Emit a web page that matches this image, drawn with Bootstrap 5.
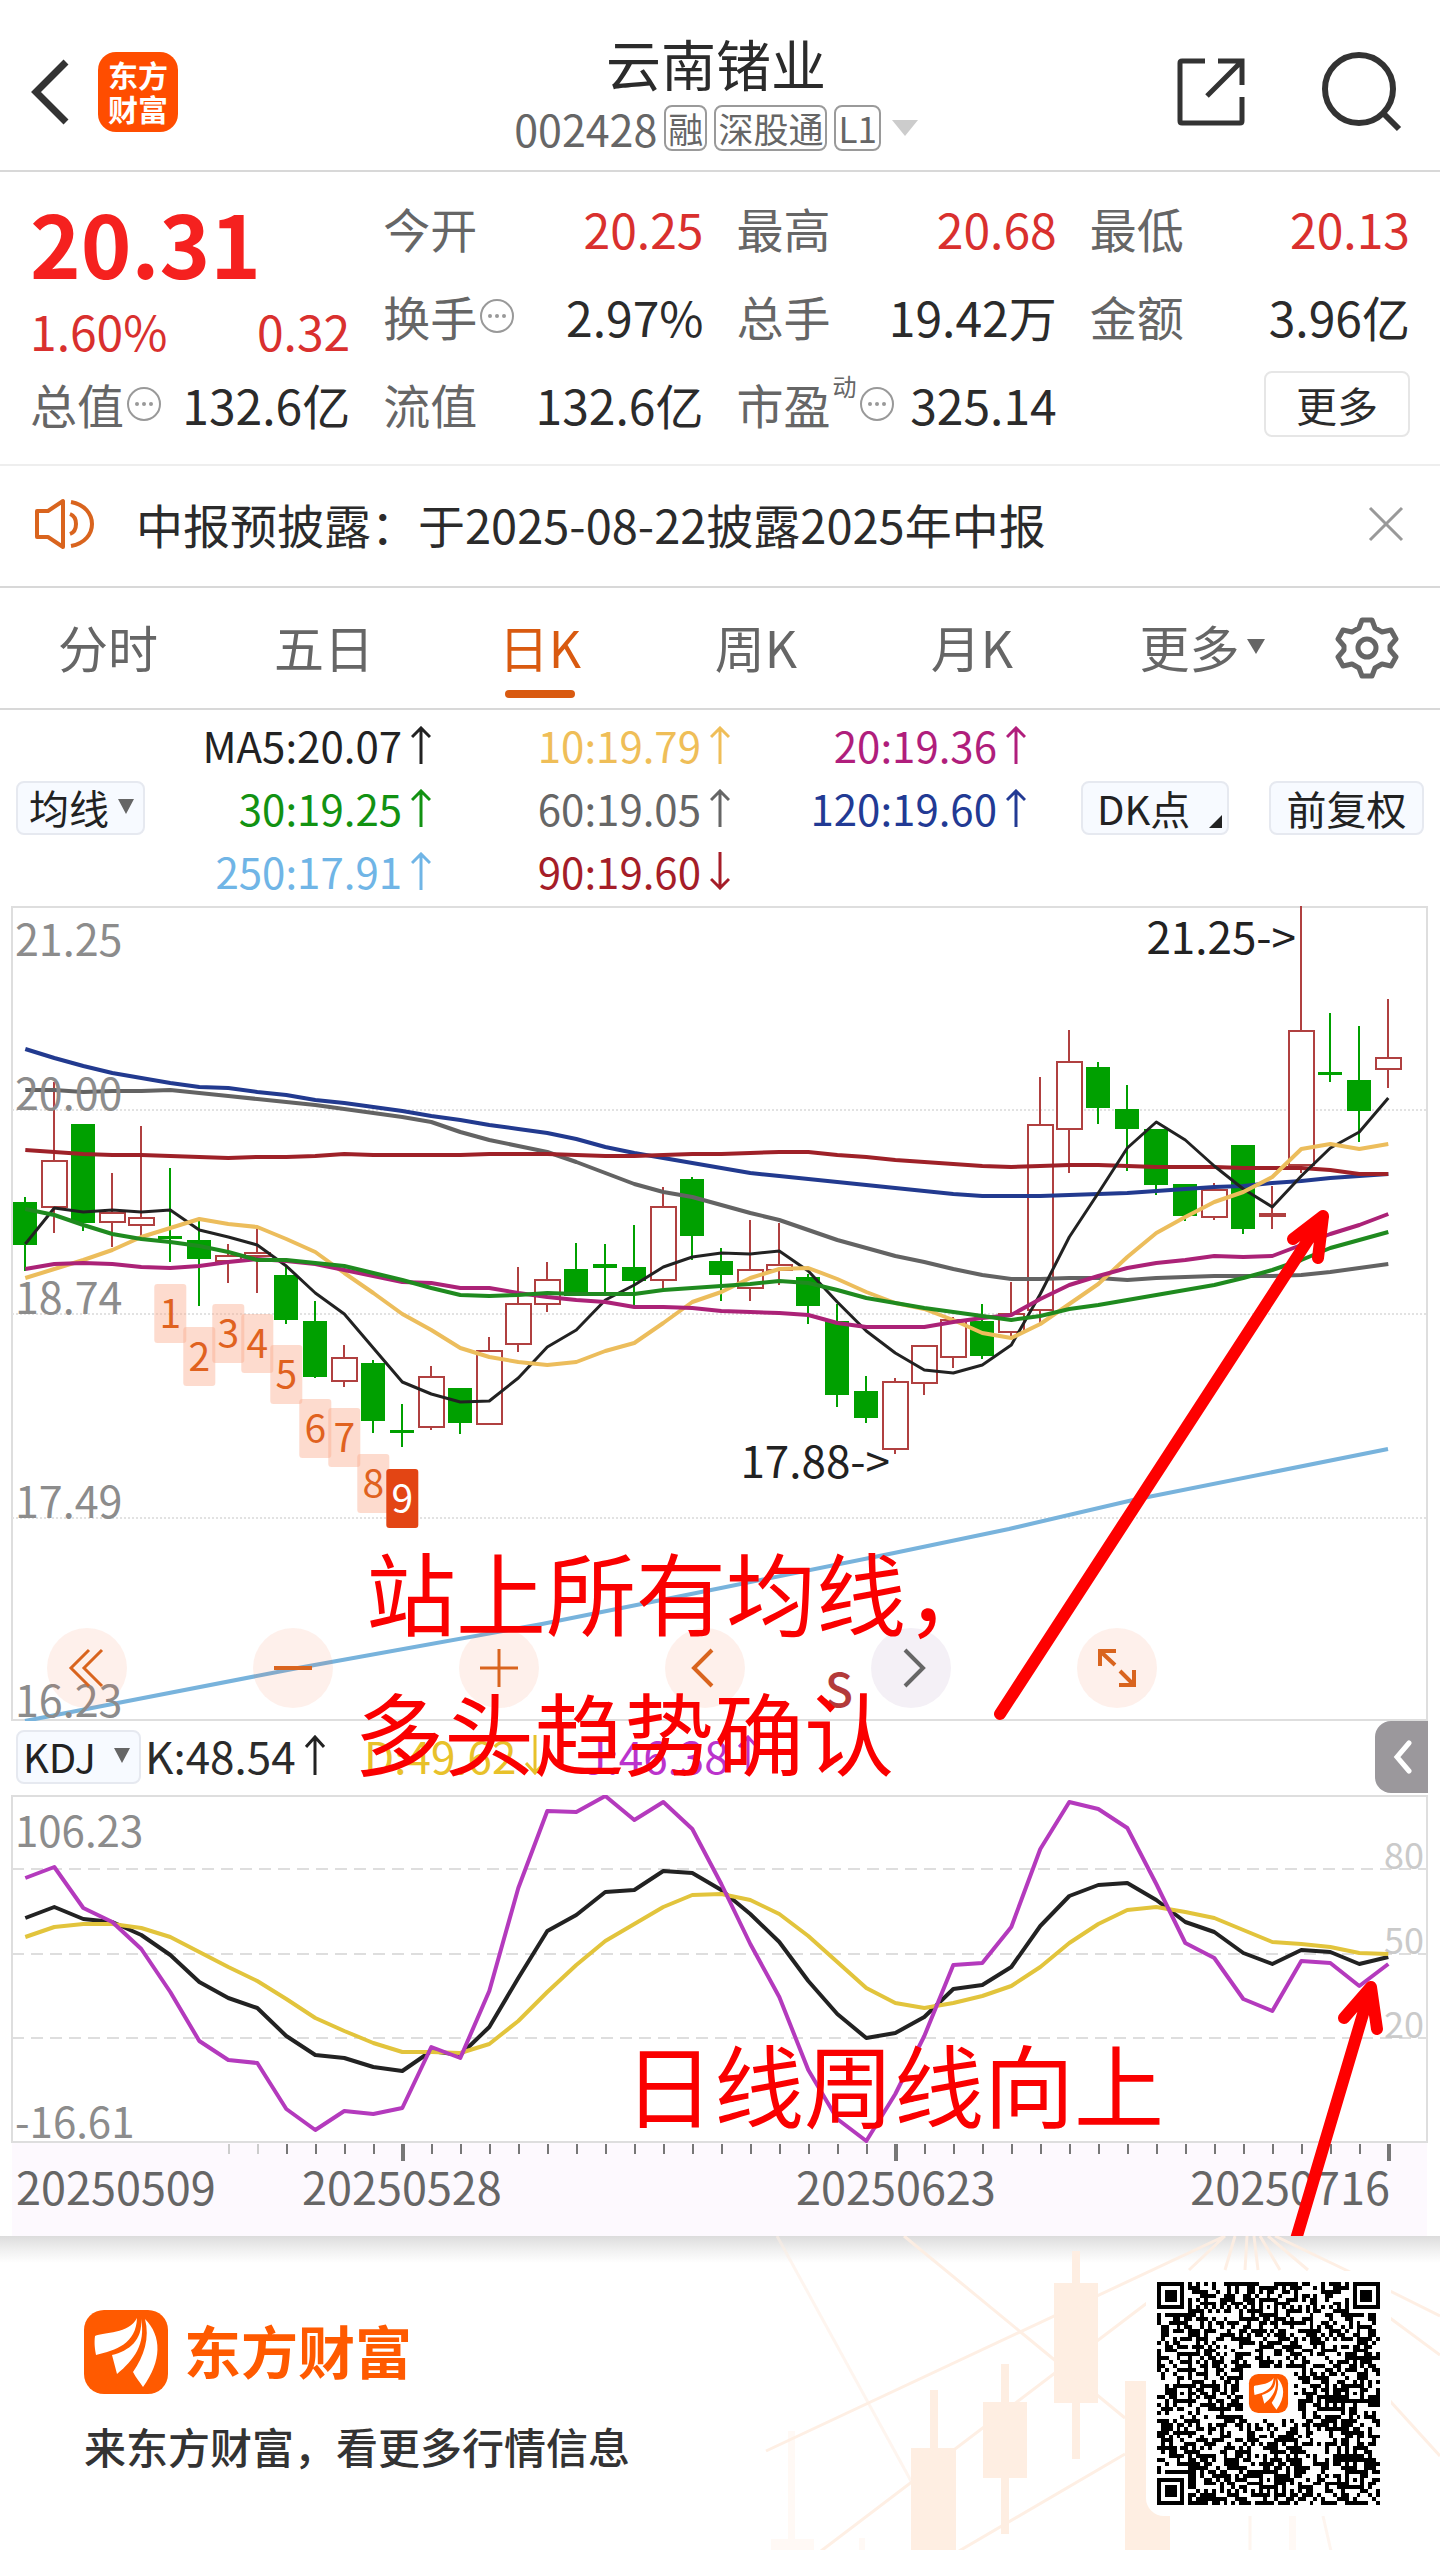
<!DOCTYPE html>
<html lang="zh-CN">
<head>
<meta charset="utf-8">
<meta name="viewport" content="width=device-width, initial-scale=1">
<title>云南锗业 002428</title>
<link href="https://cdn.jsdelivr.net/npm/bootstrap@5.3.0/dist/css/bootstrap.min.css" rel="stylesheet">
<style>
body{font-family:"Noto Sans CJK SC","Noto Sans",sans-serif;color:#2b2b2b;background:#fff;line-height:1.2}
svg{display:block}
button,select{font-family:inherit;color:inherit}
.iconbtn{border:0;background:none;padding:0;display:block}
.topbar{display:grid;grid-template-columns:1fr auto 1fr;height:172px;padding:14px 38px 0 30px;border-bottom:2px solid #d8d8d8}
.applogo{width:80px;height:80px;border-radius:18px;background:#ff4d00;color:#fff;font-size:30px;line-height:34px;font-weight:700;text-align:center;padding-top:5px}
.stock-name{font-size:55px;line-height:72px;font-weight:400;margin:0}
.stock-code{font-size:43px;line-height:60px;color:#666;gap:7px}
.tagbox{font-size:35px;line-height:42px;border:2px solid #9a9a9a;border-radius:8px;padding:0 2px;color:#666}
.caret-s{width:0;height:0;border-left:6px solid transparent;border-right:6px solid transparent;border-top:15px solid #666;display:inline-block}
.caret-l{border-left-width:13px;border-right-width:13px;border-top:16px solid #ccc}
.caret-m{border-left-width:9px;border-right-width:9px}
.quote{display:grid;grid-template-columns:repeat(4,1fr);grid-auto-rows:88px;column-gap:33px;padding:12px 30px 16px;border-bottom:2px solid #eee}
.pricebox{grid-row:span 2}
.price{font-size:86px;line-height:116px;font-weight:700;color:#f5211f}
.qcell{display:flex;align-items:center;justify-content:space-between;white-space:nowrap;font-size:48px;line-height:60px}
.qlabel{color:#666;font-size:47px;display:flex;align-items:center;gap:2px}
.qlabel sup{font-size:24px;top:-18px}
.up{color:#d9302e}
.morebtn{width:146px;height:66px;border:2px solid #e6e6e6;border-radius:8px;background:#fff;font-size:41px;line-height:56px;padding:0}
.notice{height:122px;padding:0 36px 4px 34px;border-bottom:2px solid #d8d8d8;font-size:47px}
.tabs{height:122px;border-bottom:2px solid #d8d8d8;font-size:50px}
.tabs a{width:15%;height:100%;color:#666;text-decoration:none;position:relative;padding-bottom:4px}
.tabs a.wide{width:17%}
.tabs a.on{color:#d95a10}
.tabs a.on::after{content:"";position:absolute;left:50%;bottom:10px;width:70px;height:8px;margin-left:-35px;border-radius:4px;background:#d95a10}
.tabs .gear{width:8%;padding-left:10px}
.mabar{height:196px;padding:0 16px}
.magrid{display:grid;grid-template-columns:287fr 300fr 297fr;grid-auto-rows:63px;flex:1;font-size:42px;margin-right:55px}
.magrid div,.kv{display:flex;align-items:center;justify-content:flex-end;gap:9px;white-space:nowrap}
.chip,.chip select{font-size:40px;line-height:50px;color:#222}
.chip{position:relative;height:54px;border:2px solid #e6e9f0;border-radius:8px;background:#f7faff;padding:0;display:block}
.chip select{appearance:none;border:0;background:transparent;padding:0 0 0 11px;width:100%;height:48px;line-height:46px;display:block}
.chip .caret-s{position:absolute;right:9px;top:16px;border-left-width:8px;border-right-width:8px}
.chip .corner{position:absolute;right:5px;bottom:5px;border-left:13px solid transparent;border-bottom:13px solid #222}
.w-ma{width:129px}.w-dk{width:148px;text-align:left;padding-left:14px}.w-fq{width:155px;margin-left:40px}.w-kdj{width:125px}
.w-kdj select{padding-left:5px}
.kdjbar{height:74px;padding:0 0 2px 16px;font-size:44px}
.kv{width:219px;justify-content:flex-start;line-height:50px;padding-bottom:4px}
.drawer{width:53px;height:72px;border:0;border-radius:16px 0 0 16px;background:#9b989c;margin-right:12px;padding:0 0 0 18px}
.chartzone{position:relative}
.chartzone text{font-family:"Noto Sans CJK SC","Noto Sans",sans-serif}
.overlay{position:absolute;left:0;top:0;width:100%;pointer-events:none}
.ctrls{position:absolute;left:47px;top:722px;display:flex;gap:126px}
.ctrls button{width:80px;height:80px;border-radius:50%;border:0;padding:0;background:rgba(250,110,60,.1)}
.ctrls button.off{background:rgba(110,70,140,.08)}
.ctrls svg{margin:auto}
.foot{position:relative;height:315px;overflow:hidden;background:linear-gradient(#dcdcdc,#f0f0f0 14px,#fff 27px)}
.foot .deco{position:absolute;right:0;top:0}
.brand{font-size:57px;line-height:64px;font-weight:700;color:#ff5a00;padding-bottom:6px}
.slogan{font-size:42px;line-height:56px;font-weight:500;color:#333;margin-top:24px}
.footrow{position:relative;padding:35px 49px 0 84px}
.footcol{padding-top:39px}
.qrcard{background:#fff;border-radius:18px;padding:11px;width:245px;height:245px}
</style>
</head>
<body>
<header class="topbar">
  <div class="d-flex align-items-center" style="gap:28px">
    <button class="iconbtn" aria-label="返回"><svg width="40" height="66" viewBox="0 0 40 66" fill="none" stroke="#333" stroke-width="7"><path d="M36 3 6 33l30 30"/></svg></button>
    <div class="applogo">东方<br>财富</div>
  </div>
  <div class="text-center pt-2 mt-1">
    <h1 class="stock-name">云南锗业</h1>
    <div class="stock-code d-flex align-items-center justify-content-center"><span>002428</span><span class="tagbox">融</span><span class="tagbox">深股通</span><span class="tagbox">L1</span><span class="caret-s caret-l ms-1"></span></div>
  </div>
  <div class="d-flex align-items-center justify-content-end" style="gap:72px">
    <button class="iconbtn" aria-label="分享"><svg width="70" height="70" viewBox="0 0 70 70" fill="none" stroke="#333" stroke-width="5"><path stroke-linejoin="round" d="M29 4H6q-2 0-2 2v58q0 2 2 2h58q2 0 2-2V40"/><path d="M42 4h24v24M66 4 31 39"/></svg></button>
    <button class="iconbtn" aria-label="搜索"><svg width="84" height="84" viewBox="0 0 84 84" fill="none" stroke="#333" stroke-width="6"><circle cx="41" cy="39" r="34"/><path d="m65 63 16 16"/></svg></button>
  </div>
</header>

<section class="quote">
  <div class="pricebox">
    <div class="price">20.31</div>
    <div class="qcell up"><span>1.60%</span><span>0.32</span></div>
  </div>
  <div class="qcell"><span class="qlabel">今开</span><span class="up">20.25</span></div>
  <div class="qcell"><span class="qlabel">最高</span><span class="up">20.68</span></div>
  <div class="qcell"><span class="qlabel">最低</span><span class="up">20.13</span></div>
  <div class="qcell"><span class="qlabel">换手<svg width="37" height="37" viewBox="0 0 37 37" fill="#999"><circle cx="18" cy="18" r="16" fill="none" stroke="#999" stroke-width="2"/><circle cx="11" cy="18" r="2"/><circle cx="18" cy="18" r="2"/><circle cx="25" cy="18" r="2"/></svg></span><span>2.97%</span></div>
  <div class="qcell"><span class="qlabel">总手</span><span>19.42万</span></div>
  <div class="qcell"><span class="qlabel">金额</span><span>3.96亿</span></div>
  <div class="qcell"><span class="qlabel">总值<svg width="37" height="37" viewBox="0 0 37 37" fill="#999"><circle cx="18" cy="18" r="16" fill="none" stroke="#999" stroke-width="2"/><circle cx="11" cy="18" r="2"/><circle cx="18" cy="18" r="2"/><circle cx="25" cy="18" r="2"/></svg></span><span>132.6亿</span></div>
  <div class="qcell"><span class="qlabel">流值</span><span>132.6亿</span></div>
  <div class="qcell"><span class="qlabel">市盈<sup>动</sup><svg width="37" height="37" viewBox="0 0 37 37" fill="#999"><circle cx="18" cy="18" r="16" fill="none" stroke="#999" stroke-width="2"/><circle cx="11" cy="18" r="2"/><circle cx="18" cy="18" r="2"/><circle cx="25" cy="18" r="2"/></svg></span><span>325.14</span></div>
  <div class="qcell justify-content-end"><button class="morebtn">更多</button></div>
</section>

<section class="notice d-flex align-items-center">
  <svg width="62" height="54" viewBox="0 0 62 54" fill="none" stroke="#d9641e" stroke-width="4" stroke-linejoin="round"><path d="M3 14h11L29 4v46L14 40H3Z"/><path d="M36 17c8 3 8 17 0 20M37 5c28 5 28 39 0 44"/></svg>
  <span class="ms-4 ps-3 me-auto">中报预披露：于2025-08-22披露2025年中报</span>
  <button class="iconbtn" aria-label="关闭"><svg width="36" height="36" viewBox="0 0 36 36" stroke="#999" stroke-width="3"><path d="m2 2 32 32M34 2 2 34"/></svg></button>
</section>

<nav class="tabs d-flex align-items-center">
  <a href="#" class="d-flex align-items-center justify-content-center">分时</a>
  <a href="#" class="d-flex align-items-center justify-content-center">五日</a>
  <a href="#" class="on d-flex align-items-center justify-content-center">日K</a>
  <a href="#" class="d-flex align-items-center justify-content-center">周K</a>
  <a href="#" class="d-flex align-items-center justify-content-center">月K</a>
  <a href="#" class="wide d-flex align-items-center justify-content-center">更多<span class="caret-s caret-m ms-2"></span></a>
  <button class="iconbtn gear" aria-label="设置"><svg width="64" height="64" viewBox="0 0 64 64" fill="none" stroke="#666" stroke-width="5" stroke-linejoin="round"><path d="M27 4h10l3 8 7 4 9-2 5 9-6 7v4l6 7-5 9-9-2-7 4-3 8H27l-3-8-7-4-9 2-5-9 6-7v-4l-6-7 5-9 9 2 7-4Z"/><circle cx="32" cy="32" r="9"/></svg></button>
</nav>

<section class="mabar d-flex align-items-center">
  <label class="chip w-ma"><select aria-label="主图指标"><option>均线</option></select><span class="caret-s"></span></label>
  <div class="magrid" id="ma"></div>
  <button class="chip w-dk">DK点<span class="corner"></span></button>
  <button class="chip w-fq">前复权</button>
</section>

<main class="chartzone">
  <svg id="kline" viewBox="0 905 1440 815" width="100%"></svg>
  <div class="kdjbar d-flex align-items-center">
    <label class="chip w-kdj"><select aria-label="副图指标"><option>KDJ</option></select><span class="caret-s"></span></label>
    <div class="kv ms-1">K:48.54<svg width="20" height="40" viewBox="0 0 20 40" fill="none" stroke="#222" stroke-width="3"><path d="M10 40V2M1 12 10 2l9 10"/></svg></div>
    <div class="kv" style="color:#e8c12a">D:49.62<svg width="20" height="40" viewBox="0 0 20 40" fill="none" stroke="currentColor" stroke-width="3"><path d="M10 0v38M1 28l9 10 9-10"/></svg></div>
    <div class="kv me-auto" style="color:#bb33cc">J:46.38<svg width="20" height="40" viewBox="0 0 20 40" fill="none" stroke="currentColor" stroke-width="3"><path d="M10 40V2M1 12 10 2l9 10"/></svg></div>
    <button class="drawer" aria-label="展开"><svg width="20" height="34" viewBox="0 0 20 34" fill="none" stroke="#fff" stroke-width="5" stroke-linecap="round"><path d="M16 3 4 17l12 14"/></svg></button>
  </div>
  <svg id="kdj" viewBox="0 1794 1440 441" width="100%"></svg>
  <div class="ctrls">
    <button aria-label="快退"><svg width="40" height="40" fill="none" stroke="#d9641e" stroke-width="3"><path d="M22 2 4 20l18 18M35 2 17 20l18 18"/></svg></button>
    <button aria-label="缩小"><svg width="40" height="40" fill="none" stroke="#d9641e" stroke-width="4"><path d="M1 20h38"/></svg></button>
    <button aria-label="放大"><svg width="40" height="40" fill="none" stroke="#d9641e" stroke-width="3"><path d="M1 20h38M20 1v38"/></svg></button>
    <button aria-label="左移"><svg width="40" height="40" fill="none" stroke="#d9641e" stroke-width="4"><path d="M27 2 9 20l18 18"/></svg></button>
    <button class="off" aria-label="右移"><svg width="40" height="40" fill="none" stroke="#666" stroke-width="4"><path d="m14 2 18 18-18 18"/></svg></button>
    <button aria-label="全屏"><svg width="40" height="40" fill="none" stroke="#d9641e" stroke-width="4"><path d="M3 18V3h16M3 3l15 14M37 22v15H22M37 37 23 23"/></svg></button>
  </div>
  <svg class="overlay" viewBox="0 905 1440 1330">
    <g fill="none" stroke="#fe0000" stroke-width="12" stroke-linecap="round" stroke-linejoin="round">
      <path d="M1000 1713 1323 1216M1293 1238l30-23-5 42"/>
      <path d="M1294 2245 1371 1986M1344 2017l27-31 6 42"/>
    </g>
    <g fill="#fa0000" font-size="90">
      <text x="366" y="1628">站上所有均线，</text>
      <text x="354" y="1768">多头趋势确认</text>
      <text x="624" y="2120">日线周线向上</text>
    </g>
  </svg>
</main>

<footer class="foot">
  <svg class="deco" width="720" height="315" viewBox="720 2235 720 315" fill="#feeee2" stroke="#feeee2">
    <g stroke="none"><path d="M1054 2282h44v120h-44ZM1072 2250h8v208h-8ZM983 2401h44v76h-44ZM1001 2363h8v170h-8ZM911 2447h45v103h-45ZM930 2389h8v60h-8ZM1125 2380h45v170h-45Z"/><path opacity=".35" d="M771 2538h43v12h-43ZM788 2430h7v110h-7ZM859 2537h6v13h-6ZM1289 2500h7v50h-7Z"/></g>
    <g fill="none" stroke-width="3" opacity=".9"><path d="m904 2235 221 182M766 2450l459-215M821 2550l326-248M959 2550l166-97M1225 2235l-36 34M1235 2235l-10 34M1247 2235l-2 34M1254 2235l4 34M1260 2235l20 34M1268 2235l40 34M1275 2235l75 36M1390 2290l50 25M1390 2317l50 37M1390 2400l50 55"/><path opacity=".6" d="m777 2235 134 245M1250 2515v35M1323 2515l8 35"/></g>
  </svg>
  <div class="footrow d-flex justify-content-between align-items-start">
    <div class="footcol d-flex flex-column">
      <div class="d-flex align-items-center gap-3">
        <svg width="84" height="84" viewBox="0 0 84 84"><use href="#mk"/></svg>
        <span class="brand">东方财富</span>
      </div>
      <div class="slogan">来东方财富，看更多行情信息</div>
    </div>
    <div class="qrcard"><svg id="qr" width="223" height="223" viewBox="0 0 57 57" shape-rendering="crispEdges"></svg></div>
  </div>
  <svg width="0" height="0"><defs><g id="mk"><rect width="84" height="84" rx="20" fill="#ff5a00"/><path fill="#fff" d="M53 8C45 24 20 22 11 26c-1 8 0 13 1 19C32 40 52 34 53 8ZM57 9c2 21-12 32-29 36l5 19C50 50 62 34 57 9ZM61 9c17 17 17 42-2 68-3-5-7-9-10-15C60 46 66 28 61 9Z"/></g></defs></svg>
</footer>

<script src="https://cdn.jsdelivr.net/npm/bootstrap@5.3.0/dist/js/bootstrap.bundle.min.js"></script>
<script>
const X = i => 25.3 + 29 * i;
const poly = (ys, c, w) => `<polyline fill="none" stroke="${c}" stroke-width="${w}" stroke-linejoin="round" points="${ys.map((y, i) => X(i).toFixed(1) + ',' + y).join(' ')}"/>`;

// moving-average legend
const ma = [['MA5:20.07','#222',1],['10:19.79','#efbe58',1],['20:19.36','#b01e7c',1],['30:19.25','#129212',1],['60:19.05','#666',1],['120:19.60','#223a94',1],['250:17.91','#70b5e6',1],['90:19.60','#a51d28',0]];
document.getElementById('ma').innerHTML = ma.map(([t, c, u]) => `<div style="color:${c}">${t}<svg width="20" height="38" viewBox="0 0 20 38" fill="none" stroke="currentColor" stroke-width="3"><path d="${u ? 'M10 38V2M1 11 10 2l9 9' : 'M10 0v36M1 27l9 9 9-9'}"/></svg></div>`).join('');

// candles: [up, bodyTop, bodyBottom, high, low]
const C = [[0,1201,1244,1196,1270],[1,1160,1206,1081,1232],[0,1123,1222,1123,1230],[1,1212,1221,1172,1246],[1,1217,1224,1125,1239],[0,1235,1238,1167,1261],[0,1239,1258,1220,1305],[1,1255,1260,1243,1282],[1,1252,1255,1227,1292],[0,1274,1319,1266,1323],[0,1320,1376,1300,1377],[1,1357,1380,1344,1386],[0,1362,1420,1359,1432],[0,1429,1432,1403,1446],[1,1376,1426,1365,1429],[0,1387,1422,1387,1433],[1,1350,1423,1336,1424],[1,1303,1343,1266,1351],[1,1279,1303,1261,1311],[0,1268,1295,1242,1295],[0,1263,1267,1243,1293],[0,1266,1280,1224,1304],[1,1206,1279,1186,1289],[0,1178,1235,1176,1259],[0,1260,1274,1247,1300],[1,1269,1287,1219,1300],[1,1264,1269,1222,1284],[0,1276,1305,1273,1323],[0,1320,1394,1303,1406],[0,1390,1417,1375,1422],[1,1381,1448,1377,1453],[1,1345,1382,1344,1394],[1,1319,1356,1316,1367],[0,1320,1355,1303,1358],[1,1313,1331,1281,1335],[1,1124,1309,1076,1324],[1,1061,1128,1029,1172],[0,1066,1107,1061,1123],[0,1108,1128,1084,1170],[0,1128,1184,1128,1194],[0,1183,1215,1183,1220],[1,1189,1216,1182,1219],[0,1144,1228,1144,1233],[1,1213,1215,1185,1228],[1,1030,1164,905,1172],[0,1071,1074,1012,1081],[0,1079,1110,1025,1141],[1,1057,1068,998,1087]];
const MA = {
 '#636363':[1089,1089,1091,1090,1090,1089,1092,1095,1098,1101,1104,1108,1112,1116,1121,1131,1139,1145,1151,1161,1172,1183,1191,1196,1204,1212,1219,1229,1239,1247,1255,1261,1268,1274,1278,1278,1277,1277,1279,1277,1276,1275,1275,1275,1274,1271,1267,1263],
 '#223a8f':[1048,1057,1065,1072,1077,1082,1086,1087,1091,1094,1099,1102,1106,1110,1115,1119,1124,1128,1132,1138,1146,1152,1157,1162,1167,1172,1175,1178,1181,1184,1187,1190,1193,1195,1195,1195,1194,1193,1192,1190,1188,1186,1185,1182,1180,1177,1175,1173],
 '#9e2128':[1149,1151,1153,1154,1154,1155,1156,1157,1156,1156,1155,1153,1154,1154,1154,1154,1153,1153,1153,1154,1155,1155,1154,1153,1153,1152,1151,1151,1154,1156,1159,1161,1163,1165,1166,1165,1164,1164,1165,1166,1166,1166,1167,1167,1167,1169,1173,1173],
 '#222222':[1243,1207,1211,1209,1211,1209,1229,1236,1244,1265,1292,1313,1347,1381,1393,1401,1400,1377,1346,1329,1299,1284,1266,1256,1252,1253,1250,1270,1301,1330,1352,1369,1372,1364,1344,1293,1236,1192,1147,1121,1139,1165,1188,1206,1175,1147,1131,1097],
 '#ecbd5c':[1277,1268,1259,1249,1236,1227,1218,1223,1226,1238,1251,1272,1292,1313,1329,1347,1356,1361,1364,1361,1350,1342,1322,1301,1291,1277,1268,1267,1278,1291,1302,1308,1319,1332,1337,1323,1303,1283,1256,1232,1216,1201,1191,1176,1148,1143,1148,1143],
 '#ab2277':[1268,1263,1262,1263,1266,1267,1265,1261,1258,1260,1263,1269,1275,1281,1282,1287,1287,1292,1296,1299,1301,1306,1306,1307,1310,1311,1312,1314,1322,1326,1326,1326,1321,1317,1314,1298,1284,1275,1267,1262,1259,1255,1256,1255,1244,1233,1224,1213],
 '#1f8a1f':[1208,1214,1224,1233,1238,1241,1245,1251,1259,1259,1262,1265,1272,1279,1287,1294,1295,1294,1292,1293,1293,1293,1289,1287,1285,1283,1280,1282,1289,1297,1302,1307,1311,1315,1319,1315,1308,1304,1299,1294,1289,1284,1277,1269,1259,1247,1239,1231]
};
let s = '<g fill="none" stroke="#dedede" stroke-width="2"><rect x="12" y="906" width="1415" height="813"/><path stroke="#e2e2e2" stroke-dasharray="2 2" d="M12 1109h1415M12 1313h1415M12 1517h1415"/></g>';
C.forEach(([u, a, b, h, l], i) => {
  const x = Math.round(X(i)), c = u ? '#b04040' : '#00a000';
  s += `<path stroke="${c}" stroke-width="2" d="M${x} ${h}V${a}M${x} ${b}V${l}"/>`;
  s += u ? `<rect x="${x - 12}" y="${a}" width="25" height="${b - a}" fill="#fff" stroke="${c}" stroke-width="2"/>`
         : `<rect x="${x - 12}" y="${a}" width="24" height="${b - a}" fill="${c}"/>`;
});
s += '<polyline fill="none" stroke="#78b3dc" stroke-width="4" points="25,1720 298,1667 542,1623 721,1587 894,1552 1009,1528 1133,1499 1388,1448"/>';
for (const c in MA) s += poly(MA[c], c, c === '#222222' ? 3 : 4);
[1283,1326,1303,1313,1344,1398,1407,1453,1468].forEach((y, i) => {
  const x = X(5 + i), last = i === 8;
  s += `<rect x="${x - 16}" y="${y}" width="32" height="59" rx="3" fill="${last ? '#e34514' : '#fba98a'}" fill-opacity="${last ? 1 : .42}"/><text x="${x}" y="${y + 44}" font-size="39" text-anchor="middle" fill="${last ? '#fff' : '#e0621f'}">${i + 1}</text>`;
});
s += '<g font-size="43" fill="#8c8c8c">' + [['21.25',955],['20.00',1109],['18.74',1313],['17.49',1517],['16.23',1716]].map(([t, y]) => `<text x="15" y="${y}">${t}</text>`).join('') + '</g>';
s += '<g font-size="44" fill="#222" text-anchor="end"><text x="1296" y="953">21.25-&gt;</text><text x="890" y="1477">17.88-&gt;</text></g><text x="839" y="1706" font-size="46" font-weight="500" text-anchor="middle" fill="#b33a3a">S</text>';
document.getElementById('kline').innerHTML = s;

// KDJ panel
const K = [1917,1906,1918,1921,1934,1954,1981,1997,2007,2035,2054,2057,2066,2070,2050,2054,2026,1977,1930,1914,1891,1889,1870,1872,1889,1913,1941,1980,2013,2037,2032,2016,1988,1984,1966,1925,1895,1884,1882,1899,1921,1931,1952,1963,1949,1951,1963,1956];
const D = [1936,1926,1923,1923,1927,1936,1951,1966,1980,1998,2017,2030,2042,2051,2051,2052,2043,2020,1991,1964,1940,1923,1906,1894,1893,1899,1913,1935,1961,1987,2002,2007,2002,1995,1985,1966,1942,1923,1909,1906,1911,1917,1929,1941,1943,1946,1952,1953];
const J = [1877,1866,1907,1921,1948,1991,2040,2059,2062,2108,2129,2110,2113,2107,2046,2057,1990,1887,1810,1811,1795,1819,1801,1828,1883,1943,1996,2069,2118,2140,2093,2035,1964,1962,1926,1848,1801,1808,1827,1883,1942,1957,1998,2010,1960,1962,1985,1963];
s = '<rect x="12" y="2141" width="1415" height="94" fill="#fdf9fe"/><g fill="none" stroke="#dedede" stroke-width="2"><rect x="12" y="1795" width="1415" height="346"/><path stroke-dasharray="12 7" d="M12 1868h1415M12 1953h1415M12 2037h1415"/></g>';
s += '<g font-size="36" fill="#cacaca" text-anchor="end"><text x="1424" y="1868">80</text><text x="1424" y="1953">50</text><text x="1424" y="2037">20</text></g>';
s += poly(K, '#222', 4) + poly(D, '#e2c43c', 4) + poly(J, '#b43abd', 4);
for (let i = 7; i < 48; i++) { const m = [13, 30, 47].includes(i), x = Math.round(X(i) + 1); s += `<path stroke="${i < 9 ? '#ccc' : '#777'}" stroke-width="${m ? 4 : 2}" d="M${x} 2143v${m ? 17 : 10}"/>`; }
s += '<g fill="#8c8c8c" font-size="42"><text x="15" y="1846">106.23</text><text x="15" y="2137">-16.61</text></g><g fill="#666" font-size="45"><text x="16" y="2204">20250509</text><text x="302" y="2204">20250528</text><text x="796" y="2204">20250623</text><text x="1390" y="2204" text-anchor="end">20250716</text></g>';
document.getElementById('kdj').innerHTML = s;

// QR code, 57 modules a side
const N = 57; let seed = 20250716, d = '';
const rnd = () => (seed = (seed * 1103515245 + 12345) & 0x7fffffff, (seed >> 16) & 1);
const ring = (x, y, cx, cy, r) => { const q = Math.max(Math.abs(x - cx), Math.abs(y - cy)); return q <= r ? q : -1; };
for (let y = 0; y < N; y++) for (let x = 0; x < N; x++) {
  let on = rnd(), q;
  if (x === 6 || y === 6) on = (x + y) % 2 === 0;
  for (const a of [6, 28, 50]) for (const b of [6, 28, 50]) if ((q = ring(x, y, a, b, 2)) >= 0) on = q !== 1;
  for (const [a, b] of [[3, 3], [53, 3], [3, 53]]) if ((q = ring(x, y, a, b, 4)) >= 0) on = q < 2 || q === 3;
  if (ring(x, y, 28, 28, 6) >= 0) on = 0;
  if (on) d += `M${x} ${y}h1v1h-1z`;
}
document.getElementById('qr').innerHTML = `<path d="${d}"/><g transform="translate(23.5 23.5) scale(.119)" shape-rendering="auto"><use href="#mk"/></g>`;
</script>
</body>
</html>
